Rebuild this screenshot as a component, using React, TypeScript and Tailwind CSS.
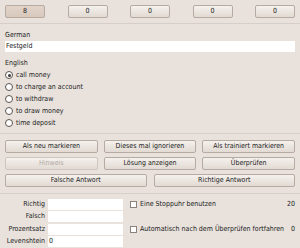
import React from "react";

const font = { fontFamily: '"DejaVu Sans Condensed", "DejaVu Sans", sans-serif' };

function Btn({ label, pressed, disabled, className = "" }: { label: string; pressed?: boolean; disabled?: boolean; className?: string }) {
  return (
    <div
      className={`h-[13px] flex items-center justify-center rounded-[2px] border border-[#b5aba3] text-[7px] leading-none whitespace-nowrap ${
        pressed
          ? "bg-gradient-to-b from-[#e2d4ca] to-[#d8c8bc] text-[#1e2a5c]"
          : "bg-gradient-to-b from-[#f5f1ed] to-[#e2dad3]"
      } ${disabled ? "text-[#b0a8a2] border-[#cdc5be]" : "text-[#222]"} ${className}`}
    >
      {label}
    </div>
  );
}

function Radio({ label, checked }: { label: string; checked?: boolean }) {
  return (
    <div className="h-[12px] flex items-center gap-[3px]">
      <div className="w-[8px] h-[8px] rounded-full border border-[#5a5450] bg-white flex items-center justify-center">
        {checked && <div className="w-[3px] h-[3px] rounded-full bg-[#3a3a3a]" />}
      </div>
      <span>{label}</span>
    </div>
  );
}

function StatRow({ label, value }: { label: string; value?: string }) {
  return (
    <div className="h-[12px] flex items-center gap-[3px]">
      <span className="w-[40px] text-right whitespace-nowrap">{label}</span>
      <div className="w-[75px] h-[11px] bg-white flex items-center px-[1px]">{value}</div>
    </div>
  );
}

export default function App() {
  return (
    <div className="w-[300px] h-[248px] bg-[#e8e1dc] text-[#222] text-[7px] leading-none overflow-hidden" style={font}>
      <div className="flex justify-between px-[5px] pt-[5px]">
        <Btn label="8" pressed className="w-[40px]" />
        <Btn label="0" className="w-[40px]" />
        <Btn label="0" className="w-[40px]" />
        <Btn label="0" className="w-[40px]" />
        <Btn label="0" className="w-[40px]" />
      </div>
      <div className="mt-[5px] border-t border-[#d6cec8]" />

      <div className="px-[5px] pt-[6px]">
        <div className="h-[10px] flex items-center">German</div>
        <div className="mt-[1px] h-[11px] bg-white flex items-center px-[1px]">Festgeld</div>
        <div className="mt-[6px] h-[10px] flex items-center">English</div>
        <div className="mt-[1px]">
          <Radio label="call money" checked />
          <Radio label="to charge an account" />
          <Radio label="to withdraw" />
          <Radio label="to draw money" />
          <Radio label="time deposit" />
        </div>
      </div>
      <div className="mt-[4px] border-t border-[#d6cec8]" />

      <div className="px-[5px] pt-[6px] flex flex-col gap-[4px]">
        <div className="grid grid-cols-3 gap-[6px]">
          <Btn label="Als neu markieren" />
          <Btn label="Dieses mal ignorieren" />
          <Btn label="Als trainiert markieren" />
        </div>
        <div className="grid grid-cols-3 gap-[6px]">
          <Btn label="Hinweis" disabled />
          <Btn label="Lösung anzeigen" />
          <Btn label="Überprüfen" />
        </div>
        <div className="grid grid-cols-2 gap-[7px]">
          <Btn label="Falsche Antwort" />
          <Btn label="Richtige Antwort" />
        </div>
      </div>
      <div className="mt-[6px] border-t border-[#d6cec8]" />

      <div className="flex px-[5px] pt-[4px]">
        <div className="flex flex-col gap-[0.5px]">
          <StatRow label="Richtig" />
          <StatRow label="Falsch" />
          <StatRow label="Prozentsatz" />
          <StatRow label="Levenshtein" value="0" />
        </div>
        <div className="flex-1 ml-[7px] flex flex-col gap-[0.5px]">
          <div className="h-[12px] flex items-center gap-[3px]">
            <div className="w-[7px] h-[7px] border border-[#8a827c] bg-white" />
            <span className="flex-1 whitespace-nowrap">Eine Stoppuhr benutzen</span>
            <span>20</span>
          </div>
          <div className="h-[12px]" />
          <div className="h-[12px] flex items-center gap-[3px]">
            <div className="w-[7px] h-[7px] border border-[#8a827c] bg-white" />
            <span className="flex-1 whitespace-nowrap">Automatisch nach dem Überprüfen fortfahren</span>
            <span>0</span>
          </div>
        </div>
      </div>
    </div>
  );
}
